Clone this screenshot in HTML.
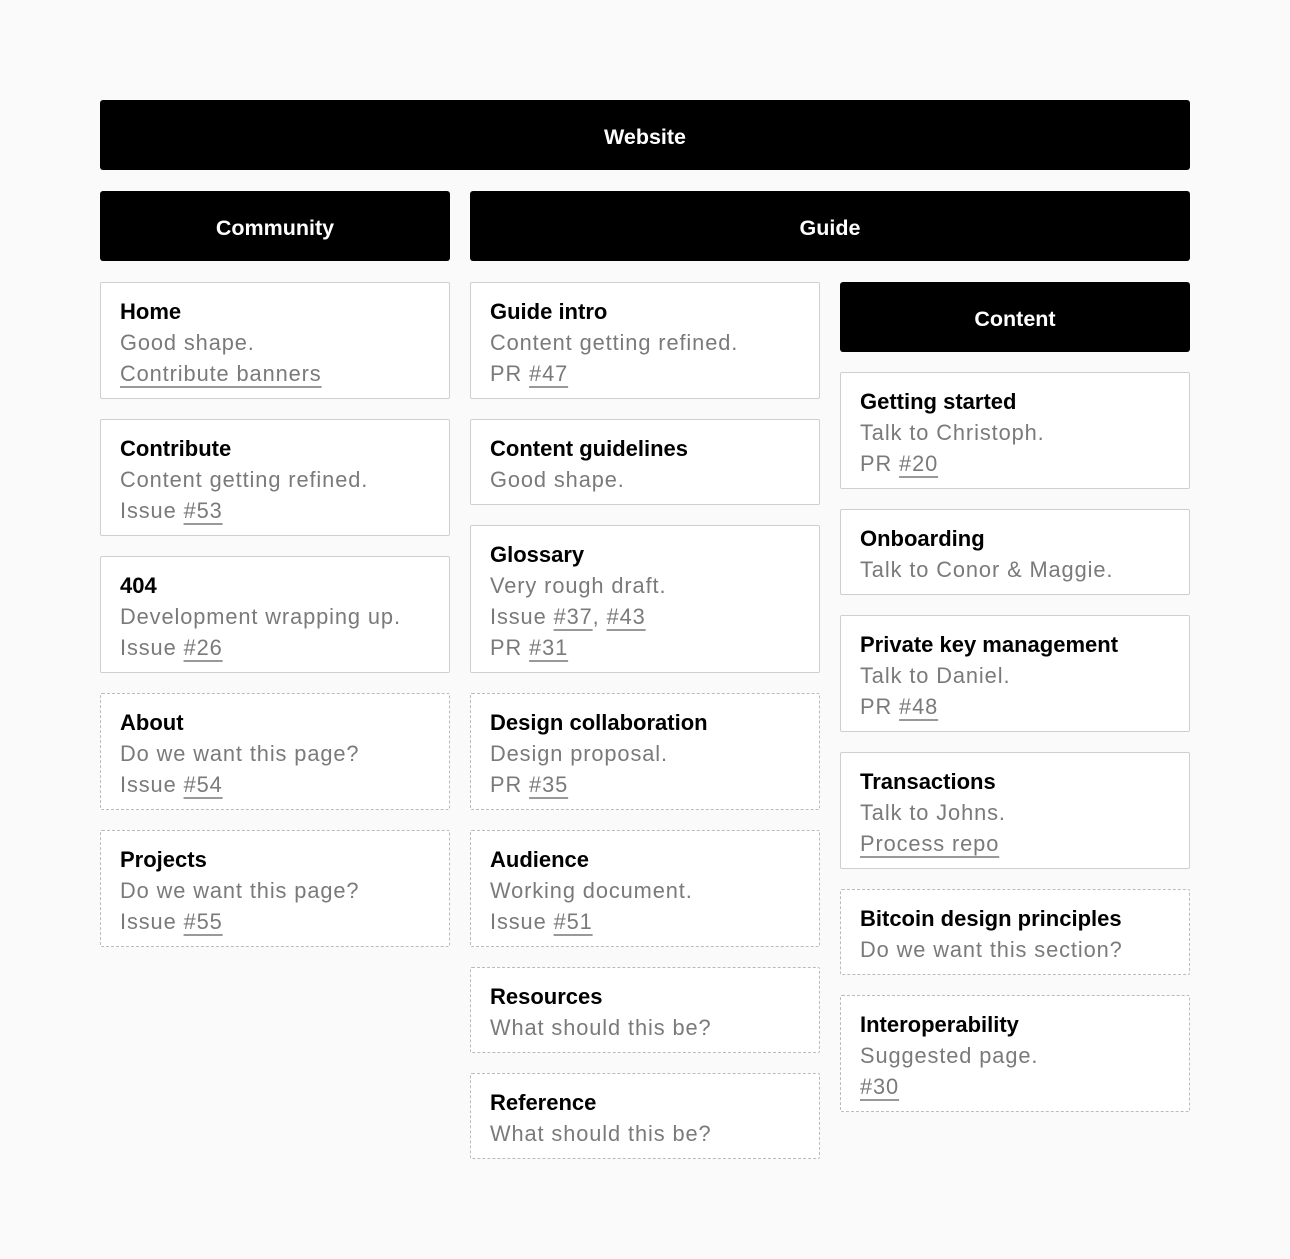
<!DOCTYPE html>
<html><head><meta charset="utf-8"><style>
*{box-sizing:border-box;margin:0;padding:0}
body{width:1290px;height:1259px;background:#fafafa;font-family:"Liberation Sans",sans-serif;position:relative;overflow:hidden}
.bar{position:absolute;height:70px;background:#000;color:#fff;font-weight:bold;font-size:21.5px;display:flex;align-items:center;justify-content:center;border-radius:3px;padding-top:4px}
.col{position:absolute;width:350px;display:flex;flex-direction:column;gap:20px}
.c{background:#fff;border:1px solid #cfcfcf;border-radius:2px;padding:13px 19px 9px;line-height:31px;font-size:21.8px;color:#7a7a7a;letter-spacing:0.9px}
.c.d{border-style:dashed;border-color:#bbb}
.c b{display:block;color:#000;font-size:22px;font-weight:bold;letter-spacing:0}
u{text-decoration:underline;text-decoration-color:#999;text-decoration-thickness:2px;text-underline-offset:5px}
</style></head><body>
<div class="bar" style="left:100px;top:100px;width:1090px">Website</div>
<div class="bar" style="left:100px;top:191px;width:350px">Community</div>
<div class="bar" style="left:470px;top:191px;width:720px">Guide</div>
<div class="col" style="left:100px;top:282px">
<div class="c"><b>Home</b>Good shape.<br><u>Contribute banners</u></div>
<div class="c"><b>Contribute</b>Content getting refined.<br>Issue <u>#53</u></div>
<div class="c"><b>404</b>Development wrapping up.<br>Issue <u>#26</u></div>
<div class="c d"><b>About</b>Do we want this page?<br>Issue <u>#54</u></div>
<div class="c d"><b>Projects</b>Do we want this page?<br>Issue <u>#55</u></div>
</div>
<div class="col" style="left:470px;top:282px">
<div class="c"><b>Guide intro</b>Content getting refined.<br>PR <u>#47</u></div>
<div class="c"><b>Content guidelines</b>Good shape.</div>
<div class="c"><b>Glossary</b>Very rough draft.<br>Issue <u>#37</u>, <u>#43</u><br>PR <u>#31</u></div>
<div class="c d"><b>Design collaboration</b>Design proposal.<br>PR <u>#35</u></div>
<div class="c d"><b>Audience</b>Working document.<br>Issue <u>#51</u></div>
<div class="c d"><b>Resources</b>What should this be?</div>
<div class="c d"><b>Reference</b>What should this be?</div>
</div>
<div class="col" style="left:840px;top:282px">
<div class="bar" style="position:static;width:350px;margin-bottom:0">Content</div>
<div class="c"><b>Getting started</b>Talk to Christoph.<br>PR <u>#20</u></div>
<div class="c"><b>Onboarding</b>Talk to Conor &amp; Maggie.</div>
<div class="c"><b>Private key management</b>Talk to Daniel.<br>PR <u>#48</u></div>
<div class="c"><b>Transactions</b>Talk to Johns.<br><u>Process repo</u></div>
<div class="c d"><b>Bitcoin design principles</b>Do we want this section?</div>
<div class="c d"><b>Interoperability</b>Suggested page.<br><u>#30</u></div>
</div>
</body></html>
